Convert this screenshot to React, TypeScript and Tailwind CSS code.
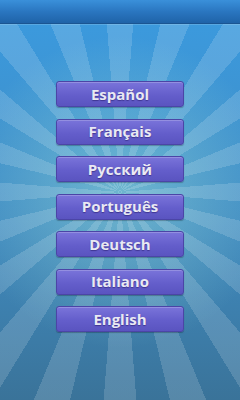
const LANGUAGES = ['Español', 'Français', 'Русский', 'Português', 'Deutsch', 'Italiano', 'English']

function LangButton({ label }: { label: string }) {
  return (
    <button
      className="w-[128px] h-[26px] rounded-[3px] border border-[#4b45a6] bg-[linear-gradient(to_bottom,#7a74da,#645ecb_55%,#5a54c0)] shadow-[inset_0_1px_0_rgba(255,255,255,0.2),0_1px_1px_rgba(0,0,0,0.25)] flex items-center justify-center text-[15px] font-bold text-[#e9e9f3] [text-shadow:0_1px_1px_rgba(40,30,110,0.6)]"
      style={{ fontFamily: '"Open Sans", "Liberation Sans", sans-serif' }}
    >
      {label}
    </button>
  )
}

export default function App() {
  return (
    <div className="w-[240px] h-[400px] overflow-hidden flex flex-col bg-[image:repeating-conic-gradient(from_-4.5deg_at_50%_48%,rgba(255,255,255,0.15)_0deg_9deg,rgba(255,255,255,0)_9deg_18deg),radial-gradient(circle_at_50%_48%,rgba(150,215,215,0.55)_0%,rgba(150,215,215,0)_65%),linear-gradient(to_bottom,#3b9be0,#408cc2_55%,#3a7399)]">
      {/* title bar */}
      <div className="h-6 shrink-0 bg-[linear-gradient(to_bottom,#3a90da,#2a76c0_50%,#1f63a8)] border-b border-[#1a5592] shadow-[0_1px_0_rgba(255,255,255,0.15)]" />

      <div className="flex flex-col items-center gap-[11.5px] pt-[57px]">
        {LANGUAGES.map((l) => (
          <LangButton key={l} label={l} />
        ))}
      </div>
    </div>
  )
}
